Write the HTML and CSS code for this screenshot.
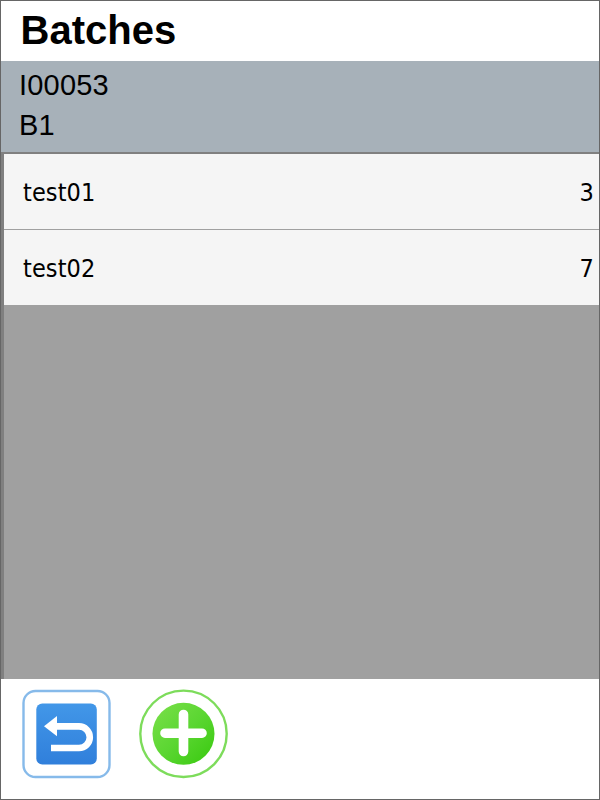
FILE: index.html
```
<!DOCTYPE html>
<html lang="en">
<head>
<meta charset="utf-8">
<title>Batches</title>
<link rel="stylesheet" href="styles.css">
</head>
<body>
<div class="window">
  <h1 class="title">Batches</h1>
  <header class="item-info">
    <div>I00053</div>
    <div>B1</div>
  </header>
  <main class="batch-list">
    <div class="row"><span>test01</span><span>3</span></div>
    <div class="row"><span>test02</span><span>7</span></div>
  </main>
  <footer class="toolbar">
    <button class="tool" aria-label="Back">
      <svg width="90" height="90" viewBox="0 0 90 90">
        <defs><linearGradient id="blue" x1="0" y1="0" x2="0" y2="1"><stop offset="0" stop-color="#4297e8"/><stop offset="1" stop-color="#307fdb"/></linearGradient></defs>
        <rect x="2.500" y="2" width="86" height="86" rx="12" fill="#fff" stroke="#86baea" stroke-width="2.400"/>
        <rect x="15.300" y="14.500" width="60.500" height="61" rx="6" fill="url(#blue)"/>
        <path d="M33 37.400H58A10.800 10.800 0 0 1 58 59H30" fill="none" stroke="#fff" stroke-width="6.600"/>
        <path d="M23 37.300L36 27V47.300Z" fill="#fff"/>
      </svg>
    </button>
    <button class="tool" aria-label="Add">
      <svg width="90" height="90" viewBox="0 0 90 90">
        <defs><linearGradient id="green" x1="0" y1="0" x2="1" y2="1"><stop offset="0" stop-color="#7be04a"/><stop offset=".5" stop-color="#5bd632"/><stop offset="1" stop-color="#37c90d"/></linearGradient></defs>
        <circle cx="45.500" cy="44.800" r="43.200" fill="#fff" stroke="#7ddc5b" stroke-width="2.400"/>
        <circle cx="45.500" cy="44.800" r="31" fill="url(#green)"/>
        <path d="M45.500 25.500V62.500M27 44.200H64" stroke="#fff" stroke-width="9.600" stroke-linecap="round"/>
      </svg>
    </button>
  </footer>
</div>
</body>
</html>
```
FILE: styles.css
```
* { box-sizing: border-box; }
body { margin: 0; color: #000; background: #fff; }
.window {
  width: 600px;
  height: 800px;
  display: flex;
  flex-direction: column;
  border: 1px solid #666;
  overflow: hidden;
  font-family: "Liberation Sans", Arial, sans-serif;
}
.title {
  height: 60px;
  margin: 0;
  padding-left: 19.5px;
  font-size: 40px;
  line-height: 58px;
}
.item-info {
  height: 91px;
  padding: 4px 0 0 18px;
  background: #a7b1b9;
  font-size: 29px;
  letter-spacing: 0.2px;
  line-height: 40px;
}
.batch-list {
  height: 527px;
  border-top: 2px solid #808080;
  border-left: 3px solid #808080;
  background: #a0a0a0;
  font-family: "DejaVu Sans Condensed", Tahoma, sans-serif;
  font-stretch: condensed;
  font-size: 25px;
  letter-spacing: 0.1px;
}
.row {
  height: 76px;
  display: flex;
  justify-content: space-between;
  align-items: center;
  padding: 1px 5px 0 19px;
  background: #f5f5f5;
  border-bottom: 1px solid #a0a0a0;
}
.toolbar {
  display: flex;
  gap: 27px;
  padding: 10px 0 0 20px;
}
.tool {
  width: 90px;
  height: 90px;
  padding: 0;
  border: 0;
  background: none;
}
.tool svg { display: block; }
```
